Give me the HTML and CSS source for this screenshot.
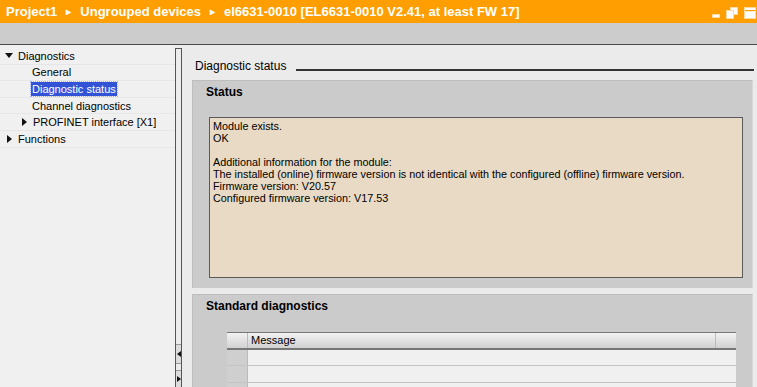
FILE: index.html
```html
<!DOCTYPE html>
<html>
<head>
<meta charset="utf-8">
<link rel="stylesheet" href="styles.css">
</head>
<body>
<div class="titlebar">
  <div class="crumbs">
    <span>Project1</span><span class="sep">&#9656;</span><span>Ungrouped devices</span><span class="sep">&#9656;</span><span>el6631-0010 [EL6631-0010 V2.41, at least FW 17]</span>
  </div>
  <svg class="winctl" width="46" height="14" viewBox="0 0 46 14">
    <rect x="1.5" y="8.5" width="7" height="3" fill="#fff" stroke="#ffd9a0"/>
    <rect x="19.5" y="1.5" width="7" height="7" fill="#fff" stroke="#ffd9a0"/>
    <rect x="15.5" y="4.5" width="7" height="8" fill="#fff" stroke="#ffd9a0"/>
    <rect x="33.5" y="1.5" width="11" height="11" fill="#fff" stroke="#ffd9a0"/>
    <rect x="34" y="4" width="10" height="1.2" fill="#ff9e00"/>
  </svg>
</div>
<div class="toolbar"></div>
<div class="main">
  <div class="tree">
    <div class="row l0"><span class="tw open"></span>Diagnostics</div>
    <div class="row l1">General</div>
    <div class="row l1"><span class="sel">Diagnostic status</span></div>
    <div class="row l1">Channel diagnostics</div>
    <div class="row l1b"><span class="tw closed"></span>PROFINET interface [X1]</div>
    <div class="row l0"><span class="tw closed"></span>Functions</div>
  </div>
  <div class="splitter">
    <div class="spacer"></div>
    <div class="sbtn"><span class="arr left"></span></div>
    <div class="sbtn"><span class="arr right"></span></div>
  </div>
  <div class="content">
    <div class="heading"><span class="htext">Diagnostic status</span><span class="hline"></span></div>
    <div class="panel status">
      <div class="ptitle">Status</div>
      <div class="infobox">
        <div>Module exists.</div>
        <div>OK</div>
        <div class="blank"></div>
        <div>Additional information for the module:</div>
        <div>The installed (online) firmware version is not identical with the configured (offline) firmware version.</div>
        <div>Firmware version: V20.57</div>
        <div>Configured firmware version: V17.53</div>
      </div>
    </div>
    <div class="panel stddiag">
      <div class="ptitle">Standard diagnostics</div>
      <div class="table">
        <div class="trow thead"><div class="c0"></div><div class="c1">Message</div><div class="c2"></div></div>
        <div class="trow"><div class="c0"></div><div class="c1"></div></div>
        <div class="trow"><div class="c0"></div><div class="c1"></div></div>
        <div class="trow"><div class="c0"></div><div class="c1"></div></div>
      </div>
    </div>
  </div>
</div>
</body>
</html>
```
FILE: styles.css
```css
* { box-sizing: border-box; }
html, body { margin: 0; padding: 0; }
body {
  width: 757px;
  height: 387px;
  overflow: hidden;
  background: #ebebeb;
  font-family: "Liberation Sans", Arial, sans-serif;
  font-size: 11px;
  color: #000;
}
.titlebar {
  height: 23px;
  background: #ff9e00;
  display: flex;
  align-items: center;
  justify-content: space-between;
  padding: 0 0 0 6px;
  color: #fff;
}
.crumbs {
  font-size: 13px;
  font-weight: bold;
  display: flex;
  white-space: nowrap;
}
.crumbs .sep { font-size: 10px; margin: 0 9px; line-height: 16px; }
.winctl { margin-top: 2px; }
.toolbar {
  height: 22px;
  background: #cccccc;
  border-bottom: 1px solid #4a4a4a;
}
.main {
  display: flex;
  height: 342px;
}
.tree {
  width: 175px;
  background: #f0f0f0;
  padding-top: 3px;
  overflow: hidden;
}
.row {
  height: 16.6px;
  border-bottom: 1px solid #e6e6e6;
  display: flex;
  align-items: center;
  white-space: nowrap;
}
.row.l0 { padding-left: 5px; }
.row.l1 { padding-left: 32px; }
.row.l1b { padding-left: 20px; }
.tw {
  width: 0; height: 0;
  display: inline-block;
}
.tw.open {
  border-left: 4px solid transparent;
  border-right: 4px solid transparent;
  border-top: 5px solid #111;
  margin-right: 5px;
}
.tw.closed {
  border-top: 4px solid transparent;
  border-bottom: 4px solid transparent;
  border-left: 5px solid #111;
  margin-left: 2px;
  margin-right: 6px;
}
.sel {
  background: #3253d6;
  color: #fff;
  padding: 1px 1px;
  margin-left: -1px;
  outline: 1px dotted #9fb0ff;
}
.splitter {
  width: 7px;
  margin-top: 3px;
  border: 1px solid #555;
  border-bottom: none;
  background: #ececec;
  display: flex;
  flex-direction: column;
}
.spacer { flex: 1; }
.sbtn {
  height: 20px;
  margin-bottom: 6px;
  background: #dcdcdc;
  border-top: 1px solid #999;
  border-bottom: 1px solid #999;
  display: flex;
  align-items: center;
  justify-content: center;
}
.sbtn:last-child { margin-bottom: 0; height: 17px; border-bottom: none; }
.arr { width: 0; height: 0; display: block; }
.arr.left { border-top: 3px solid transparent; border-bottom: 3px solid transparent; border-right: 4px solid #111; }
.arr.right { border-top: 3px solid transparent; border-bottom: 3px solid transparent; border-left: 4px solid #111; }
.content {
  flex: 1;
  padding: 0 4px 0 10px;
  display: flex;
  flex-direction: column;
  min-height: 0;
}
.heading {
  height: 35px;
  flex-shrink: 0;
  display: flex;
  align-items: center;
  padding-left: 3px;
  padding-top: 6px;
}
.htext { font-size: 12px; white-space: nowrap; }
.hline {
  flex: 1;
  height: 2px;
  background: #333;
  margin-left: 10px;
  margin-top: 9px;
  margin-right: -1px;
}
.panel {
  background: #cbcbcb;
  border-top: 1px solid #bdbdbd;
  border-left: 1px solid #bdbdbd;
  border-right: 1px solid #d8d8d8;
}
.status {
  height: 208px;
  flex-shrink: 0;
  padding: 0 9px 10px 16px;
  display: flex;
  flex-direction: column;
}
.ptitle {
  font-weight: bold;
  font-size: 12px;
  height: 22px;
  display: flex;
  align-items: center;
  white-space: nowrap;
}
.status .ptitle { margin-left: -3px; }
.infobox {
  margin-top: 14px;
  flex: 1;
  background: #e8dac5;
  border: 1px solid #5a5a5a;
  padding: 2px 3px;
  font-size: 10.8px;
  line-height: 12px;
  white-space: nowrap;
}
.blank { height: 12px; }
.stddiag {
  margin-top: 6px;
  flex: 1;
  min-height: 0;
  overflow: hidden;
  padding: 0 16px 0 34px;
}
.stddiag .ptitle { margin-left: -21px; }
.table {
  margin-top: 15px;
  border-top: 1px solid #777;
}
.trow {
  display: flex;
  height: 16.7px;
  border-bottom: 1px solid #c4c4c4;
  background: #f0f0f0;
}
.trow .c0 { width: 21px; background: #cfcfcf; border-right: 1px solid #bbb; }
.trow .c1 { flex: 1; padding-left: 3px; display: flex; align-items: center; }
.thead {
  background: linear-gradient(#f2f2f2, #dedede 60%, #d2d2d2);
  border-bottom: 2px solid #777;
}
.thead .c0 { background: linear-gradient(#f2f2f2, #dedede 60%, #d2d2d2); }
.thead .c2 { width: 21px; border-left: 1px solid #bbb; }
```
